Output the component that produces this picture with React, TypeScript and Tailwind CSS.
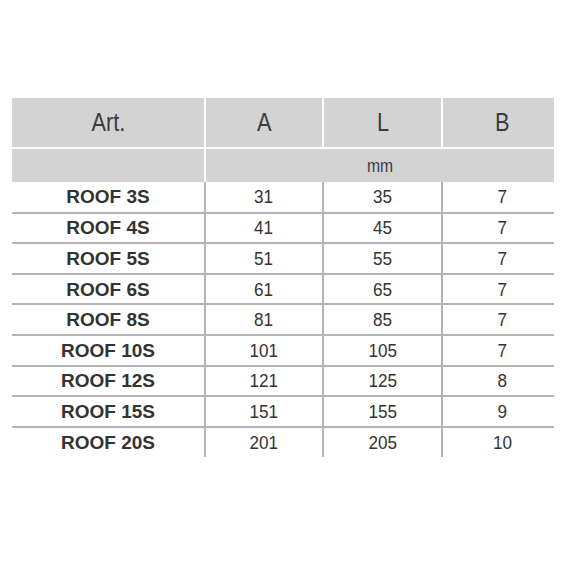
import React from "react"

const rows = [
  ["ROOF 3S", "31", "35", "7"],
  ["ROOF 4S", "41", "45", "7"],
  ["ROOF 5S", "51", "55", "7"],
  ["ROOF 6S", "61", "65", "7"],
  ["ROOF 8S", "81", "85", "7"],
  ["ROOF 10S", "101", "105", "7"],
  ["ROOF 12S", "121", "125", "8"],
  ["ROOF 15S", "151", "155", "9"],
  ["ROOF 20S", "201", "205", "10"],
]

const font = { fontFamily: '"Liberation Sans", Arial, sans-serif' }

// narrow face look: squeeze text horizontally
function N({ children }: { children: React.ReactNode }) {
  return <span className="inline-block scale-x-[0.87]">{children}</span>
}

function M({ children }: { children: React.ReactNode }) {
  return <span className="inline-block scale-x-[0.9]">{children}</span>
}

export default function App() {
  return (
    <div className="h-[566px] w-[566px] bg-white pl-[12px] pt-[98px]" style={font}>
      <table className="w-[542px] table-fixed border-collapse text-[#333333]">
        <colgroup>
          <col className="w-[193px]" />
          <col className="w-[118px]" />
          <col className="w-[119px]" />
          <col className="w-[112px]" />
        </colgroup>
        <thead>
          <tr className="h-[50px] bg-[#d3d3d3] text-[25px] text-[#3c3c3c]">
            <th className="border-r-2 border-b-2 border-white pt-[1px] font-normal"><N>Art.</N></th>
            <th className="border-r-2 border-b-2 border-white pt-[1px] font-normal"><N>A</N></th>
            <th className="border-r-2 border-b-2 border-white pt-[1px] font-normal"><N>L</N></th>
            <th className="border-b-2 border-white pt-[1px] pl-[8px] font-normal"><N>B</N></th>
          </tr>
          <tr className="h-[34px] bg-[#d3d3d3] text-[18px] text-[#3c3c3c]">
            <th className="border-r-2 border-white font-normal"></th>
            <th colSpan={3} className="pt-[1px] font-normal">
              <N>mm</N>
            </th>
          </tr>
        </thead>
        <tbody>
          {rows.map((r, i) => (
            <tr
              key={r[0]}
              className={`h-[30.6px] ${i < rows.length - 1 ? "border-b-2 border-[#b4b4b4]" : ""}`}
            >
              <td className="border-r-2 border-[#b4b4b4] text-center text-[19px] leading-none font-bold">{r[0]}</td>
              <td className="border-r-2 border-[#b4b4b4] text-center text-[19px] leading-none"><M>{r[1]}</M></td>
              <td className="border-r-2 border-[#b4b4b4] text-center text-[19px] leading-none"><M>{r[2]}</M></td>
              <td className="pl-[8px] text-center text-[19px] leading-none"><M>{r[3]}</M></td>
            </tr>
          ))}
        </tbody>
      </table>
    </div>
  )
}
